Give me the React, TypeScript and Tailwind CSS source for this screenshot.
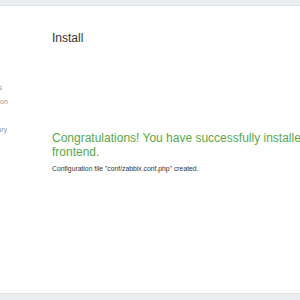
import React from "react";

const steps = [
  "Welcome",
  "Check of pre-requisites",
  "Configure DB connection",
  "Settings",
  "Pre-installation summary",
  "Install",
];

export default function App() {
  return (
    <div
      className="w-[300px] h-[300px] overflow-hidden flex flex-col bg-white"
      style={{ fontFamily: '"Liberation Sans", Arial, sans-serif' }}
    >
      <div className="h-[6px] shrink-0 bg-[#ebeef0] border-b border-[#e1e5e8]" />
      <div className="flex-1 flex min-h-0">
        <div className="ml-[-70px] w-[122px] shrink-0 pt-[61px] flex flex-col">
          {steps.map((s) => (
            <div
              key={s}
              className="h-[14px] leading-[14px] text-[7px] text-[#8a9aa3] whitespace-nowrap"
            >
              {s}
            </div>
          ))}
        </div>
        <div className="w-[320px] shrink-0 pt-[25px]">
          <div className="text-[12px] leading-[14px] text-[#333333]">Install</div>
          <div className="mt-[86px] text-[12px] leading-[14px] text-[#59a84b]">
            Congratulations! You have successfully installed Zabbix frontend.
          </div>
          <div className="mt-[5px] text-[6.8px] leading-[9px] text-[#333333] whitespace-nowrap">
            Configuration file "conf/zabbix.conf.php" created.
          </div>
        </div>
      </div>
      <div className="h-[7px] shrink-0 bg-[#ebeef0] border-t border-[#e1e5e8]" />
    </div>
  );
}
